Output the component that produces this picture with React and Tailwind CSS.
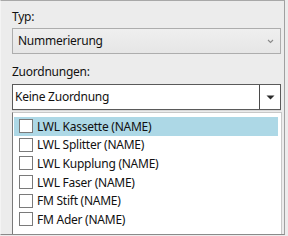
import React from "react";

const items = [
  "LWL Kassette (NAME)",
  "LWL Splitter (NAME)",
  "LWL Kupplung (NAME)",
  "LWL Faser (NAME)",
  "FM Stift (NAME)",
  "FM Ader (NAME)",
];

export default function App() {
  return (
    <div
      className="w-[288px] h-[236px] bg-[#ececec] overflow-hidden"
      style={{ fontFamily: '"Noto Sans", sans-serif' }}
    >
      <div className="w-[285px] h-[235px] border-t border-r border-b border-l border-t-[#a8a8a8] border-r-[#a0a0a0] border-b-[#8a8a8a] border-l-[#f4f4f4] pl-[11px] pr-[3px] flex flex-col text-[12px] tracking-[-0.25px] text-[#111] overflow-hidden">
        <div className="h-[27px] pt-[8px] leading-[15px]">Typ:</div>
        <div className="h-[26px] w-[269px] border border-[#adadad] bg-gradient-to-b from-[#efefef] to-[#e6e6e6] flex items-center pl-[5px] pr-[6px]">
          <span className="flex-1">Nummerierung</span>
          <svg width="7" height="5" viewBox="0 0 7 5">
            <path d="M1 1 L3.5 3.5 L6 1" fill="none" stroke="#8a8a8a" strokeWidth="1.1" />
          </svg>
        </div>
        <div className="h-[30px] pt-[10px] leading-[15px]">Zuordnungen:</div>
        <div className="h-[26px] w-[269px] border border-[#5a5a5a] bg-white flex items-stretch shadow-[0_1px_0_#d8d8d8]">
          <span className="flex-1 flex items-center pl-[2px]">Keine Zuordnung</span>
          <div className="w-[21px] border-l border-[#4a4a4a] bg-white flex items-center justify-center">
            <svg width="9" height="5" viewBox="0 0 9 5">
              <path d="M0.5 0.5 L8.5 0.5 L4.5 4.5 Z" fill="#2a2a2a" />
            </svg>
          </div>
        </div>
        <div className="mt-[2px] w-[270px] flex-1 border-l border-t border-r border-l-[#7a7a7a] border-t-[#c8c8c8] border-r-[#c8c8c8] bg-white pl-[1px] pr-[3px] pt-[4px] overflow-hidden">
          {items.map((t, i) => (
            <div
              key={t}
              className={
                "h-[18.6px] flex items-center pl-[5px] " +
                (i === 0 ? "bg-[#add8e6]" : "")
              }
            >
              <span className="w-[14px] h-[14px] border border-[#7a7a7a] bg-white mr-[4px] shrink-0" />
              <span className="leading-[15px]">{t}</span>
            </div>
          ))}
        </div>
      </div>
    </div>
  );
}
